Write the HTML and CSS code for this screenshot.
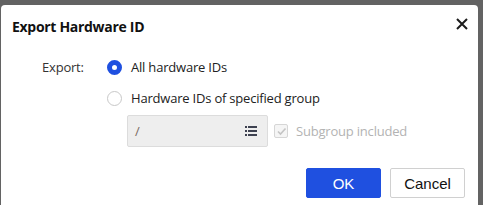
FILE: index.html
```html
<!DOCTYPE html>
<html lang="en">
<head>
    <meta charset="UTF-8">
    <title>Export Hardware ID</title>
    <link rel="stylesheet" href="styles.css">
</head>
<body>
    <div class="dialog">
        <div class="dialog-header">
            <span class="dialog-title">Export Hardware ID</span>
            <button class="close-btn" aria-label="Close">
                <svg width="12" height="12" viewBox="0 0 12 12"><path d="M1 1 L11 11 M11 1 L1 11" stroke="#1c1c1c" stroke-width="2" fill="none"/></svg>
            </button>
        </div>

        <div class="dialog-body">
            <div class="form-row">
                <div class="form-label">Export:</div>
                <label class="radio">
                    <span class="radio-dot checked"></span>
                    <span>All hardware IDs</span>
                </label>
            </div>
            <div class="form-row">
                <div class="form-label"></div>
                <label class="radio">
                    <span class="radio-dot"></span>
                    <span>Hardware IDs of specified group</span>
                </label>
            </div>
            <div class="form-row group-row">
                <div class="form-label"></div>
                <div class="group-select">
                    <span class="group-path">/</span>
                    <svg class="list-icon" width="12" height="10" viewBox="0 0 12 10">
                        <rect x="0" y="0" width="2" height="2" fill="#3d4150"/>
                        <rect x="3" y="0" width="9" height="2" fill="#3d4150"/>
                        <rect x="0" y="4" width="2" height="2" fill="#3d4150"/>
                        <rect x="3" y="4" width="9" height="2" fill="#3d4150"/>
                        <rect x="0" y="8" width="2" height="2" fill="#3d4150"/>
                        <rect x="3" y="8" width="9" height="2" fill="#3d4150"/>
                    </svg>
                </div>
                <label class="checkbox disabled">
                    <span class="check-box">
                        <svg width="11" height="11" viewBox="0 0 11 11"><path d="M2 5.5 L4.5 8 L9.5 2.5" stroke="#c4c4c4" stroke-width="1.6" fill="none"/></svg>
                    </span>
                    <span>Subgroup included</span>
                </label>
            </div>
        </div>

        <div class="dialog-footer">
            <button class="btn btn-primary">OK</button>
            <button class="btn">Cancel</button>
        </div>
    </div>
</body>
</html>
```

FILE: styles.css
```css
* { box-sizing: border-box; margin: 0; padding: 0; }
body { background: #636363; font-family: "Open Sans", Arial, sans-serif; font-size: 13px; letter-spacing: -0.2px; color: #333; padding: 5px 0 0 1px; height: 205px; overflow: hidden; }

.dialog { width: 477px; height: 200px; background: #fff; border-radius: 4px 4px 0 0; }

.dialog-header { height: 42px; display: flex; align-items: center; justify-content: space-between; padding: 0 9px 0 11px; }
.dialog-title { font-size: 14px; font-weight: bold; color: #111; letter-spacing: -0.3px; }
.close-btn { background: none; border: none; width: 14px; height: 14px; display: flex; align-items: center; justify-content: center; margin-top: -4px; cursor: pointer; }

.dialog-body { padding-top: 9px; }
.form-row { display: flex; align-items: center; height: 22px; margin-bottom: 9px; }
.form-row:nth-child(2) { margin-bottom: 6px; }
.form-label { width: 106px; padding-left: 41px; color: #333; }

.radio { display: flex; align-items: center; gap: 9px; color: #222; }
.radio-dot { width: 15px; height: 15px; border-radius: 50%; border: 1px solid #c8c8c8; background: #fff; }
.radio-dot.checked { border: 5px solid #1f50e0; }

.group-row { height: 32px; margin-left: 20px; margin-bottom: 0; }
.group-select { width: 141px; height: 32px; background: #eeeeee; border: 1px solid #dcdcdc; border-radius: 2px; display: flex; align-items: center; justify-content: space-between; padding: 0 10px 0 7px; }
.group-path { color: #7a6a60; }

.checkbox { display: flex; align-items: center; gap: 8px; margin-left: 6px; color: #b3b3b3; }
.check-box { width: 14px; height: 14px; border: 1px solid #d6d6d6; border-radius: 2px; background: #f5f5f5; display: flex; align-items: center; justify-content: center; }

.dialog-footer { display: flex; justify-content: flex-end; gap: 9px; padding: 21px 13px 0 0; }
.btn { width: 75px; height: 30px; border: 1px solid #d0d0d0; background: #fff; border-radius: 2px; font-family: Arial, sans-serif; font-size: 15px; letter-spacing: 0; color: #111; cursor: pointer; }
.btn-primary { background: #1f50e0; border-color: #1f50e0; color: #fff; }
```
